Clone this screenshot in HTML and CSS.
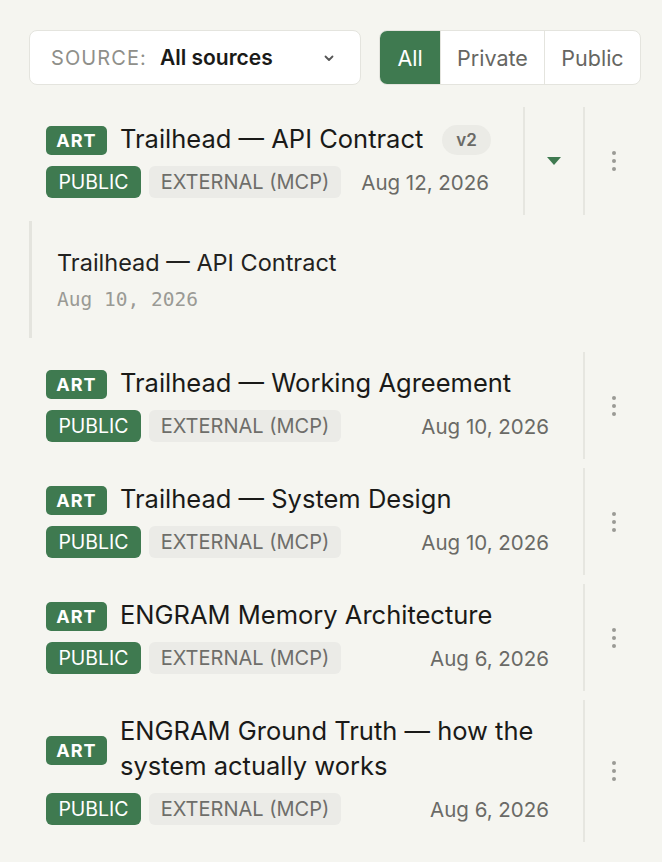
FILE: index.html
```html
<!DOCTYPE html>
<html>
<head>
<meta charset="utf-8">
<link rel="stylesheet" href="styles.css">
</head>
<body>
<div class="page">
  <div class="toolbar">
    <div class="select">
      <span class="sel-label">SOURCE:</span>
      <span class="sel-value">All sources</span>
      <svg class="sel-chev" width="14" height="14" viewBox="0 0 14 14"><path d="M3.5 5.5 L7 9 L10.5 5.5" fill="none" stroke="#555" stroke-width="1.8" stroke-linecap="round" stroke-linejoin="round"/></svg>
    </div>
    <div class="seg">
      <div class="seg-btn active">All</div>
      <div class="seg-btn">Private</div>
      <div class="seg-btn">Public</div>
    </div>
  </div>

  <div class="list">
    <div class="row">
      <div class="main">
        <div class="line1">
          <span class="art">ART</span>
          <span class="title nowrap">Trailhead — API Contract</span>
          <span class="ver">v2</span>
        </div>
        <div class="line2">
          <span class="pub">PUBLIC</span>
          <span class="ext">EXTERNAL (MCP)</span>
          <span class="date">Aug 12, 2026</span>
        </div>
      </div>
      <div class="col chev">
        <svg width="16" height="10" viewBox="0 0 16 10"><path d="M1 1 L15 1 L8 9 Z" fill="#3f7a50"/></svg>
      </div>
      <div class="col kebab"><span class="dots"><i></i><i></i><i></i></span></div>
    </div>

    <div class="child">
      <div class="child-title">Trailhead — API Contract</div>
      <div class="child-date">Aug 10, 2026</div>
    </div>

    <div class="row">
      <div class="main">
        <div class="line1">
          <span class="art">ART</span>
          <span class="title">Trailhead — Working Agreement</span>
        </div>
        <div class="line2">
          <span class="pub">PUBLIC</span>
          <span class="ext">EXTERNAL (MCP)</span>
          <span class="date">Aug 10, 2026</span>
        </div>
      </div>
      <div class="col kebab"><span class="dots"><i></i><i></i><i></i></span></div>
    </div>

    <div class="row">
      <div class="main">
        <div class="line1">
          <span class="art">ART</span>
          <span class="title">Trailhead — System Design</span>
        </div>
        <div class="line2">
          <span class="pub">PUBLIC</span>
          <span class="ext">EXTERNAL (MCP)</span>
          <span class="date">Aug 10, 2026</span>
        </div>
      </div>
      <div class="col kebab"><span class="dots"><i></i><i></i><i></i></span></div>
    </div>

    <div class="row">
      <div class="main">
        <div class="line1">
          <span class="art">ART</span>
          <span class="title">ENGRAM Memory Architecture</span>
        </div>
        <div class="line2">
          <span class="pub">PUBLIC</span>
          <span class="ext">EXTERNAL (MCP)</span>
          <span class="date">Aug 6, 2026</span>
        </div>
      </div>
      <div class="col kebab"><span class="dots"><i></i><i></i><i></i></span></div>
    </div>

    <div class="row">
      <div class="main">
        <div class="line1">
          <span class="art">ART</span>
          <span class="title">ENGRAM Ground Truth — how the system actually works</span>
        </div>
        <div class="line2">
          <span class="pub">PUBLIC</span>
          <span class="ext">EXTERNAL (MCP)</span>
          <span class="date">Aug 6, 2026</span>
        </div>
      </div>
      <div class="col kebab"><span class="dots"><i></i><i></i><i></i></span></div>
    </div>
  </div>
</div>
</body>
</html>
```

FILE: styles.css
```css
* { box-sizing: border-box; }
html, body {
  margin: 0;
  background: #f5f5f0;
  font-family: Inter, "Noto Sans", sans-serif;
  color: #1a1a18;
}
.page {
  padding: 30px 21px 0 29px;
}
.toolbar {
  display: flex;
  gap: 18px;
  height: 55px;
}
.select {
  width: 332px;
  background: #fff;
  border: 1px solid #e4e4de;
  border-radius: 8px;
  display: flex;
  align-items: center;
  padding: 0 24px 0 21px;
}
.sel-label {
  color: #8f8f8a;
  font-size: 20px;
  letter-spacing: 1.1px;
}
.sel-value {
  font-weight: 600;
  font-size: 21px;
  margin-left: 13px;
  color: #1a1a18;
}
.sel-chev { margin-left: auto; }
.seg {
  flex: 1;
  display: flex;
  background: #fff;
  border: 1px solid #e4e4de;
  border-radius: 8px;
  overflow: hidden;
}
.seg-btn {
  display: flex;
  align-items: center;
  justify-content: center;
  font-size: 21.5px;
  color: #666662;
  border-left: 1px solid #e4e4de;
}
.seg-btn:nth-child(1) { width: 60px; border-left: none; }
.seg-btn:nth-child(2) { width: 104px; }
.seg-btn:nth-child(3) { flex: 1; }
.seg-btn.active {
  background: #3f7a50;
  color: #fff;
}
.list {
  margin-top: 22px;
  display: flex;
  flex-direction: column;
}
.row {
  display: flex;
  min-height: 107px;
  margin-bottom: 9px;
}
.main {
  flex: 1;
  min-width: 0;
  padding: 18px 34px 17px 17px;
  display: flex;
  flex-direction: column;
  justify-content: center;
  gap: 11px;
}
.line1 {
  display: flex;
  align-items: center;
  gap: 13px;
  min-height: 29px;
}
.art {
  flex: none;
  background: #3f7a50;
  color: #fff;
  font-weight: 700;
  font-size: 18px;
  letter-spacing: 1px;
  border-radius: 5px;
  height: 29px;
  width: 61px;
  display: flex;
  align-items: center;
  justify-content: center;
}
.title {
  font-size: 25.5px;
  line-height: 35px;
  margin: -5px 0 -1px;
  color: #1a1a18;
}
.title.nowrap {
  white-space: nowrap;
  flex: none;
}
.ver {
  flex: none;
  margin-left: 6px;
  background: #ebebe6;
  color: #6a6a66;
  font-size: 17px;
  font-weight: 600;
  border-radius: 15px;
  height: 30px;
  padding: 0 14px;
  display: flex;
  align-items: center;
}
.line2 {
  display: flex;
  align-items: center;
  gap: 8px;
}
.pub {
  background: #3f7a50;
  color: #fff;
  font-size: 19.5px;
  border-radius: 6px;
  height: 32px;
  width: 95px;
  display: flex;
  align-items: center;
  justify-content: center;
}
.ext {
  background: #ebebe7;
  color: #6e6e6a;
  font-size: 20px;
  border-radius: 6px;
  height: 32px;
  width: 192px;
  display: flex;
  align-items: center;
  justify-content: center;
}
.date {
  margin-left: auto;
  font-size: 20.5px;
  color: #6a6a66;
}
.col {
  flex: none;
  border-left: 2px solid #e6e6e0;
  display: flex;
  align-items: center;
  justify-content: center;
}
.chev { width: 60px; }
.kebab { width: 58px; }
.dots {
  display: flex;
  flex-direction: column;
  gap: 4px;
  margin-left: 2px;
}
.dots i {
  display: block;
  width: 4px;
  height: 4px;
  border-radius: 50%;
  background: #9a9a95;
}
.child {
  margin: -3px 0 14px 0;
  border-left: 3px solid #e4e4de;
  padding: 29px 0 27px 25px;
}
.child-title {
  font-size: 23.5px;
  line-height: 26px;
  color: #222220;
}
.child-date {
  margin-top: 13px;
  font-family: "DejaVu Sans Mono", "Liberation Mono", monospace;
  font-size: 19.5px;
  line-height: 22px;
  color: #9a9a95;
}
```
